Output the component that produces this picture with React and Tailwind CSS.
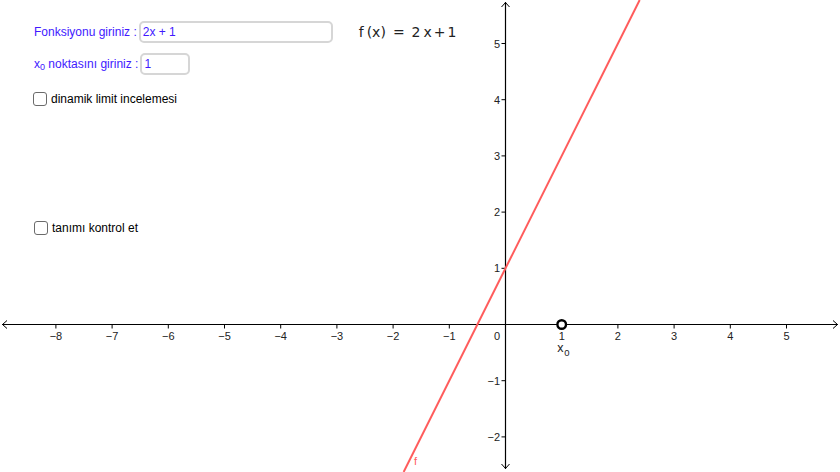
import React from 'react';

const OX = 505.5;
const OY = 324.5;
const U = 56.2;

const xTicks = [-8, -7, -6, -5, -4, -3, -2, -1, 1, 2, 3, 4, 5];
const yTicks = [-2, -1, 1, 2, 3, 4, 5];

const fmt = (n) => (n < 0 ? '\u2212' + Math.abs(n) : String(n));

const Graph = () => {
  // line y = 2x + 1 clipped to the canvas
  const yTop = OY / U;
  const yBot = -(472 - OY) / U;
  const x1 = OX + ((yTop - 1) / 2) * U;
  const x2 = OX + ((yBot - 1) / 2) * U;

  return (
    <svg width="840" height="472" className="block" style={{ fontFamily: '"Liberation Sans", Arial, sans-serif' }}>
      {/* axes */}
      <line x1="2" y1={OY} x2="838" y2={OY} stroke="#000" strokeWidth="1.2" />
      <line x1={OX} y1="2" x2={OX} y2="469" stroke="#000" strokeWidth="1.2" />
      <polyline points={`7,${OY - 4} 2.5,${OY} 7,${OY + 4}`} fill="none" stroke="#000" strokeWidth="1" />
      <polyline points={`833,${OY - 4} 837.5,${OY} 833,${OY + 4}`} fill="none" stroke="#000" strokeWidth="1" />
      <polyline points={`${OX - 4},7 ${OX},2.5 ${OX + 4},7`} fill="none" stroke="#000" strokeWidth="1" />
      <polyline points={`${OX - 4},464 ${OX},468.5 ${OX + 4},464`} fill="none" stroke="#000" strokeWidth="1" />

      {xTicks.map((n) => {
        const x = OX + n * U;
        return (
          <g key={'x' + n}>
            <line x1={x} y1={OY} x2={x} y2={OY + 4} stroke="#000" strokeWidth="1" />
            <text x={x} y={OY + 15.5} fontSize="11" fill="#222" textAnchor="middle">{fmt(n)}</text>
          </g>
        );
      })}
      {yTicks.map((n) => {
        const y = OY - n * U;
        return (
          <g key={'y' + n}>
            <line x1={OX - 4} y1={y} x2={OX} y2={y} stroke="#000" strokeWidth="1" />
            <text x={OX - 5.5} y={y + 4} fontSize="11" fill="#222" textAnchor="end">{fmt(n)}</text>
          </g>
        );
      })}
      <text x={OX - 5.5} y={OY + 15.5} fontSize="11" fill="#222" textAnchor="end">0</text>

      {/* f */}
      <line x1={x1} y1="0" x2={x2} y2="472" stroke="#ff5c5c" strokeWidth="2" />
      <text x="414" y="465" fontSize="11" fill="#ff5c5c">f</text>

      {/* point x0 */}
      <circle cx={OX + U} cy={OY} r="4.3" fill="#fff" stroke="#000" strokeWidth="2.4" />
      <text x={OX + U - 4.5} y="351.5" fontSize="12.5" fill="#222">x</text>
      <text x={OX + U + 2.5} y="356" fontSize="9.5" fill="#222">0</text>
    </svg>
  );
};

const Checkbox = ({ label }) => (
  <label className="flex items-center gap-[4px] text-[12px] text-black">
    <span className="w-[14px] h-[14px] rounded-[3px] border-[1.5px] border-[#6b6b6b] bg-white" />
    <span>{label}</span>
  </label>
);

export default function App() {
  return (
    <div
      className="relative w-[840px] h-[472px] bg-white overflow-hidden"
      style={{ fontFamily: '"Liberation Sans", Arial, sans-serif' }}
    >
      <Graph />

      <div className="absolute left-0 top-0 pl-[33px] pt-[21px] flex flex-col">
        <div className="flex items-center h-[22px]">
          <span className="text-[12px] text-[#4119ff] pl-[1px]">Fonksiyonu giriniz :</span>
          <div className="ml-[2px] w-[194px] h-[22px] rounded-[5px] border-2 border-[#d6d6d6] bg-white flex items-center pl-[2px] text-[12px] text-[#4119ff]">
            2x + 1
          </div>
          <span
            className="ml-[26px] flex items-center text-[#222] text-[14px]"
            style={{ fontFamily: '"DejaVu Sans", sans-serif' }}
          >
            <span>f</span>
            <span className="ml-[3px]">(x)</span>
            <span className="ml-[7px]">=</span>
            <span className="ml-[7px]">2</span>
            <span className="ml-[3px]">x</span>
            <span className="ml-[2px]">+</span>
            <span className="ml-[2px]">1</span>
          </span>
        </div>

        <div className="flex items-center h-[22px] mt-[10px]">
          <span className="text-[12px] text-[#4119ff] pl-[1px]">
            x<sub className="text-[9px]">0</sub> noktasını giriniz :
          </span>
          <div className="ml-[2px] w-[50px] h-[22px] rounded-[5px] border-2 border-[#d6d6d6] bg-white flex items-center pl-[2px] text-[12px] text-[#4119ff]">
            1
          </div>
        </div>

        <div className="mt-[15px]">
          <Checkbox label="dinamik limit incelemesi" />
        </div>

        <div className="mt-[111px] pl-[1px]">
          <Checkbox label="tanımı kontrol et" />
        </div>
      </div>
    </div>
  );
}
